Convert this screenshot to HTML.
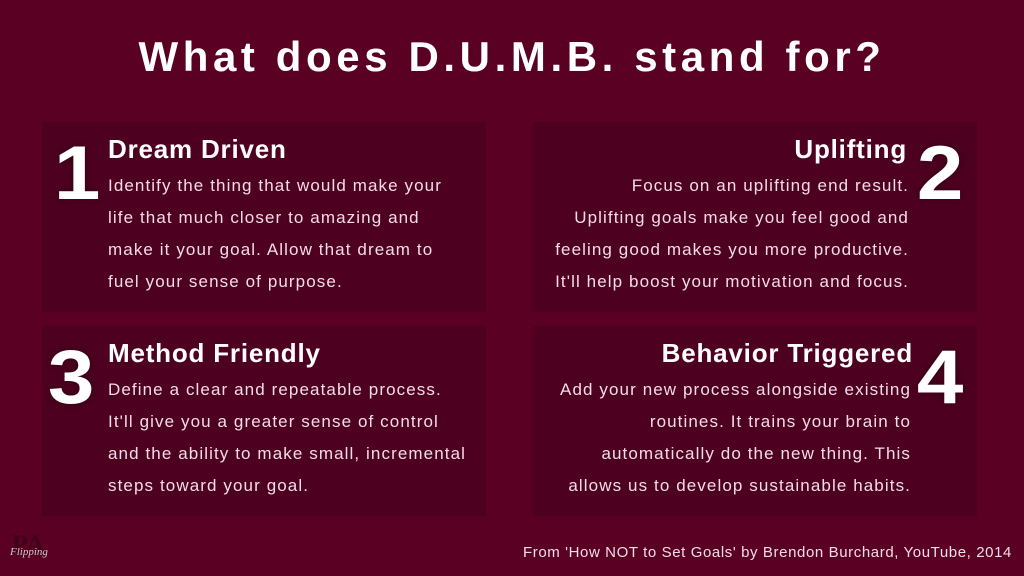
<!DOCTYPE html>
<html><head><meta charset="utf-8"><style>
*{margin:0;padding:0;box-sizing:border-box}
body{width:1024px;height:576px;background:#5a0123;font-family:"Liberation Sans",sans-serif;position:relative;overflow:hidden;color:#fff}
h1{position:absolute;top:33px;left:0;width:1024px;text-align:center;font-size:42px;font-weight:bold;letter-spacing:4.6px;color:#fff}
.p{position:absolute;background:#4e0020;width:444px;height:190px}
.n{position:absolute;font-size:76px;font-weight:bold;top:8px;text-shadow:0 0 8px rgba(0,0,0,.4);transform:scaleX(1.1)}
.t{position:absolute;top:12px;font-size:26px;font-weight:bold;letter-spacing:.8px}
.b{position:absolute;top:48px;font-size:17px;line-height:32px;color:#f2dde5;letter-spacing:1.1px;white-space:nowrap}
.r .t,.r .b{text-align:right}
</style></head><body>
<h1>What does D.U.M.B. stand for?</h1>
<div class="p" style="left:42px;top:122px"><div class="n" style="left:14px">1</div><div class="t" style="left:66px">Dream Driven</div><div class="b" style="left:66px">Identify the thing that would make your<br>life that much closer to amazing and<br>make it your goal. Allow that dream to<br>fuel your sense of purpose.</div></div>
<div class="p r" style="left:533px;top:122px"><div class="n" style="left:386px">2</div><div class="t" style="right:70px">Uplifting</div><div class="b" style="right:68px">Focus on an uplifting end result.<br>Uplifting goals make you feel good and<br>feeling good makes you more productive.<br>It'll help boost your motivation and focus.</div></div>
<div class="p" style="left:42px;top:326px"><div class="n" style="left:8px">3</div><div class="t" style="left:66px">Method Friendly</div><div class="b" style="left:66px">Define a clear and repeatable process.<br>It'll give you a greater sense of control<br>and the ability to make small, incremental<br>steps toward your goal.</div></div>
<div class="p r" style="left:533px;top:326px"><div class="n" style="left:386px">4</div><div class="t" style="right:64px">Behavior Triggered</div><div class="b" style="right:66px">Add your new process alongside existing<br>routines. It trains your brain to<br>automatically do the new thing. This<br>allows us to develop sustainable habits.</div></div>
<div style="position:absolute;left:12px;top:530px;font:bold 26px 'Liberation Serif',serif;color:#3f0018">PA</div>
<div style="position:absolute;left:10px;top:546px;font:italic 11px 'Liberation Serif',serif;color:#ccc">Flipping</div>
<div style="position:absolute;right:12px;top:544px;font-size:15px;color:#f2dde5;letter-spacing:.6px">From 'How NOT to Set Goals' by Brendon Burchard, YouTube, 2014</div>
</body></html>
